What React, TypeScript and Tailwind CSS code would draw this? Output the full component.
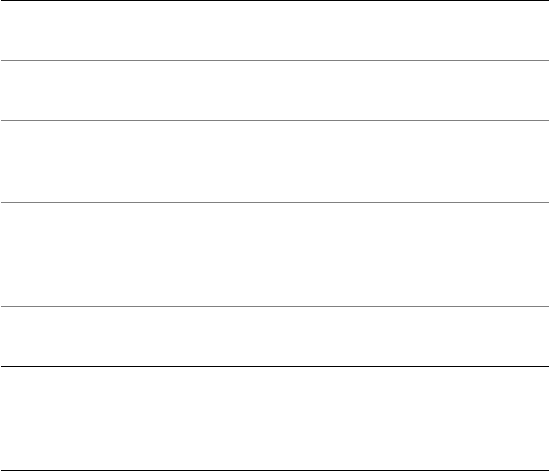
export default function App() {
  const rows = [
    { h: "h-[60px]", border: "border-[#808080]" },
    { h: "h-[60px]", border: "border-[#808080]" },
    { h: "h-[82px]", border: "border-[#808080]" },
    { h: "h-[104px]", border: "border-[#808080]" },
    { h: "h-[60px]", border: "border-black" },
    { h: "h-[104px]", border: "border-black" },
  ];

  return (
    <div className="min-h-screen w-full bg-white">
      <div className="ml-px flex w-[548px] flex-col border-t border-black">
        {rows.map((r, i) => (
          <div key={i} className={"border-b " + r.h + " " + r.border} />
        ))}
      </div>
    </div>
  );
}
